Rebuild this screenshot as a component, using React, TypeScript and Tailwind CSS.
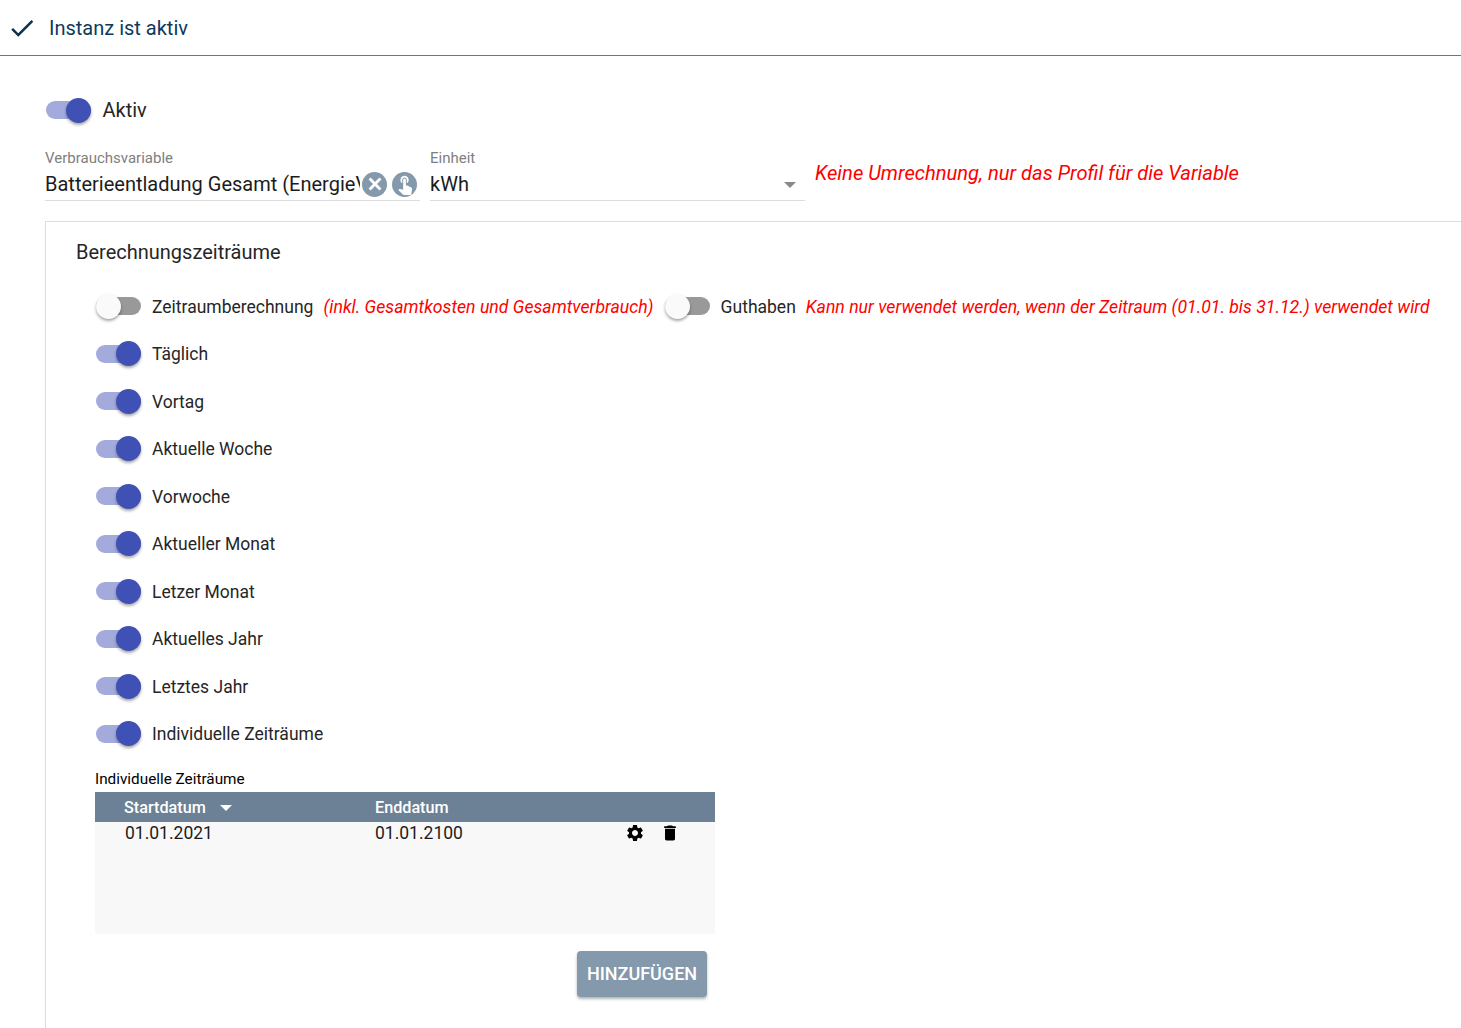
import React from "react";

const FONT = "font-['Roboto',sans-serif]";

function Toggle({ on }: { on: boolean }) {
  return (
    <div
      className={`flex h-[18px] w-[45px] shrink-0 items-center rounded-full ${
        on ? "justify-end bg-[#a3abdc]" : "justify-start bg-[#999999]"
      }`}
    >
      <div
        className={`h-[25px] w-[25px] shrink-0 rounded-full shadow-[0_2px_3px_rgba(0,0,0,0.35)] ${
          on ? "bg-[#3f51b5]" : "bg-[#fafafa]"
        }`}
      />
    </div>
  );
}

function Row({ label }: { label: string }) {
  return (
    <div className="flex h-[47.5px] items-center">
      <Toggle on />
      <span className="ml-[11px] pt-[1px] text-[17.5px] text-[#262626]">{label}</span>
    </div>
  );
}

function CircleBtn({ children }: { children: React.ReactNode }) {
  return (
    <div className="flex h-[25px] w-[25px] shrink-0 items-center justify-center rounded-full bg-[#8499ab]">
      {children}
    </div>
  );
}

const rows = [
  "Täglich",
  "Vortag",
  "Aktuelle Woche",
  "Vorwoche",
  "Aktueller Monat",
  "Letzer Monat",
  "Aktuelles Jahr",
  "Letztes Jahr",
  "Individuelle Zeiträume",
];

export default function App() {
  return (
    <div className={`${FONT} h-[1028px] w-[1461px] overflow-hidden bg-white`}>
      <header className="flex h-14 items-center border-b border-[#66788a] pl-[7px]">
        <svg viewBox="0 0 24 24" className="h-[30px] w-[30px] fill-[#0d3050]">
          <path d="M9 16.17L4.83 12l-1.42 1.41L9 19 21 7l-1.41-1.41z" />
        </svg>
        <span className="ml-[12px] text-[20px] text-[#0d3a5c]">Instanz ist aktiv</span>
      </header>

      <div className="mt-[30px] flex h-[48px] items-center pl-[46px]">
        <Toggle on />
        <span className="ml-[11.5px] text-[20px] text-[#262626]">Aktiv</span>
      </div>

      <div className="ml-[45px] mt-[12px] flex h-[75px] items-start">
        <div className="flex h-[55px] w-[375px] flex-col border-b border-[#dddddd] pt-[4px]">
          <span className="text-[15px] leading-[16px] text-[#808080]">Verbrauchsvariable</span>
          <div className="mt-[5px] flex items-center">
            <span className="mr-[2px] w-[315px] shrink-0 overflow-hidden whitespace-nowrap text-[20px] leading-[26px] text-[#1c1c1c]">
              Batterieentladung Gesamt (EnergieVerbrauch)
            </span>
            <div className="mr-[5px]">
              <CircleBtn>
                <svg viewBox="0 0 24 24" className="h-[20px] w-[20px] stroke-white stroke-[3.4]" fill="none">
                  <path d="M5.5 5.5 18.5 18.5M18.5 5.5 5.5 18.5" />
                </svg>
              </CircleBtn>
            </div>
            <CircleBtn>
              <svg viewBox="0 0 24 24" className="h-[22px] w-[22px] fill-white">
                <path d="M9 11.24V7.5C9 6.12 10.12 5 11.5 5S14 6.12 14 7.5v3.74c1.21-.81 2-2.18 2-3.74C16 5.01 13.99 3 11.5 3S7 5.01 7 7.5c0 1.56.79 2.93 2 3.74zm9.84 4.63l-4.54-2.26c-.17-.07-.35-.11-.54-.11H13v-6c0-.83-.67-1.5-1.5-1.5S10 6.67 10 7.5v10.74l-3.43-.72c-.08-.01-.15-.03-.24-.03-.31 0-.59.13-.79.33l-.79.8 4.94 4.94c.27.27.65.44 1.06.44h6.79c.75 0 1.33-.55 1.44-1.28l.75-5.27c.01-.07.02-.14.02-.2 0-.62-.38-1.16-.91-1.38z" />
              </svg>
            </CircleBtn>
          </div>
        </div>
        <div className="ml-[10px] flex h-[55px] w-[375px] flex-col border-b border-[#dddddd] pt-[4px]">
          <span className="text-[15px] leading-[16px] text-[#808080]">Einheit</span>
          <div className="mt-[5px] flex items-center justify-between">
            <span className="text-[20px] leading-[26px] text-[#1c1c1c]">kWh</span>
            <div className="mr-[9px] mt-[1px] h-0 w-0 border-x-[6px] border-t-[6px] border-x-transparent border-t-[#8a8a8a]" />
          </div>
        </div>
        <span className="ml-[10px] mt-[14px] whitespace-nowrap text-[20.15px] italic leading-[26px] text-[#ff0000]">
          Keine Umrechnung, nur das Profil für die Variable
        </span>
      </div>

      <section className="ml-[45px] h-[900px] border-l border-t border-[#dddddd] pl-[30px] pt-[17px]">
        <h2 className="text-[20px] font-normal leading-[26px] text-[#262626]">Berechnungszeiträume</h2>

        <div className="ml-[20px] mt-[17.5px]">
          <div className="flex h-[47.5px] items-center whitespace-nowrap text-[17.5px]">
            <Toggle on={false} />
            <span className="ml-[11px] pt-[1px] text-[#262626]">Zeitraumberechnung</span>
            <span className="ml-[10px] pt-[1px] text-[17.66px] italic text-[#ff0000]">(inkl. Gesamtkosten und Gesamtverbrauch)</span>
            <div className="ml-[11px]">
              <Toggle on={false} />
            </div>
            <span className="ml-[11px] pt-[1px] text-[#262626]">Guthaben</span>
            <span className="ml-[10px] pt-[1px] text-[17.66px] italic text-[#ff0000]">
              Kann nur verwendet werden, wenn der Zeitraum (01.01. bis 31.12.) verwendet wird
            </span>
          </div>
          {rows.map((r) => (
            <Row key={r} label={r} />
          ))}
        </div>

        <div className="ml-[19px] mt-[10.5px] w-[620px]">
          <div className="text-[15.3px] leading-[22px] text-black">Individuelle Zeiträume</div>
          <div className="mt-[2px] h-[142px] bg-[#f8f8f8]">
            <div className="flex h-[30px] items-center bg-[#6c8096] pt-[2px] text-[16.2px] font-medium text-white">
              <div className="flex w-[280px] items-center pl-[29px]">
                Startdatum
                <div className="ml-[14px] h-0 w-0 border-x-[6px] border-t-[6px] border-x-transparent border-t-white" />
              </div>
              <div>Enddatum</div>
            </div>
            <div className="flex h-[22px] items-center text-[17.5px] text-[#1c1c1c]">
              <div className="w-[250px] pl-[30px]">01.01.2021</div>
              <div className="ml-[30px] w-[250px]">01.01.2100</div>
              <svg viewBox="0 0 24 24" className="h-[20px] w-[20px] fill-black">
                <path d="M19.14,12.94c0.04-0.3,0.06-0.61,0.06-0.94c0-0.32-0.02-0.64-0.07-0.94l2.03-1.58c0.18-0.14,0.23-0.41,0.12-0.61 l-1.92-3.32c-0.12-0.22-0.37-0.29-0.59-0.22l-2.39,0.96c-0.5-0.38-1.03-0.7-1.62-0.94L14.4,2.81c-0.04-0.24-0.24-0.41-0.48-0.41 h-3.84c-0.24,0-0.43,0.17-0.47,0.41L9.25,5.35C8.66,5.59,8.12,5.92,7.63,6.29L5.24,5.33c-0.22-0.08-0.47,0-0.59,0.22L2.74,8.87 C2.62,9.08,2.66,9.34,2.86,9.48l2.03,1.58C4.84,11.36,4.8,11.69,4.8,12s0.02,0.64,0.07,0.94l-2.03,1.58 c-0.18,0.14-0.23,0.41-0.12,0.61l1.92,3.32c0.12,0.22,0.37,0.29,0.59,0.22l2.39-0.96c0.5,0.38,1.03,0.7,1.62,0.94l0.36,2.54 c0.05,0.24,0.24,0.41,0.48,0.41h3.84c0.24,0,0.44-0.17,0.47-0.41l0.36-2.54c0.59-0.24,1.13-0.56,1.62-0.94l2.39,0.96 c0.22,0.08,0.47,0,0.59-0.22l1.92-3.32c0.12-0.22,0.07-0.47-0.12-0.61L19.14,12.94z M12,15.6c-1.98,0-3.6-1.62-3.6-3.6 s1.62-3.6,3.6-3.6s3.6,1.62,3.6,3.6S13.98,15.6,12,15.6z" />
              </svg>
              <svg viewBox="0 0 24 24" className="ml-[15px] h-[20px] w-[20px] fill-black">
                <path d="M6 19c0 1.1.9 2 2 2h8c1.1 0 2-.9 2-2V7H6v12zM19 4h-3.5l-1-1h-5l-1 1H5v2h14V4z" />
              </svg>
            </div>
          </div>
          <div className="mt-[17px] flex justify-end pr-[8px]">
            <button className="h-[46px] w-[130px] rounded bg-[#8499ab] pb-[2px] text-[18px] font-medium text-white shadow-[0_2px_3px_rgba(0,0,0,0.3)]">
              HINZUFÜGEN
            </button>
          </div>
        </div>
      </section>
    </div>
  );
}
